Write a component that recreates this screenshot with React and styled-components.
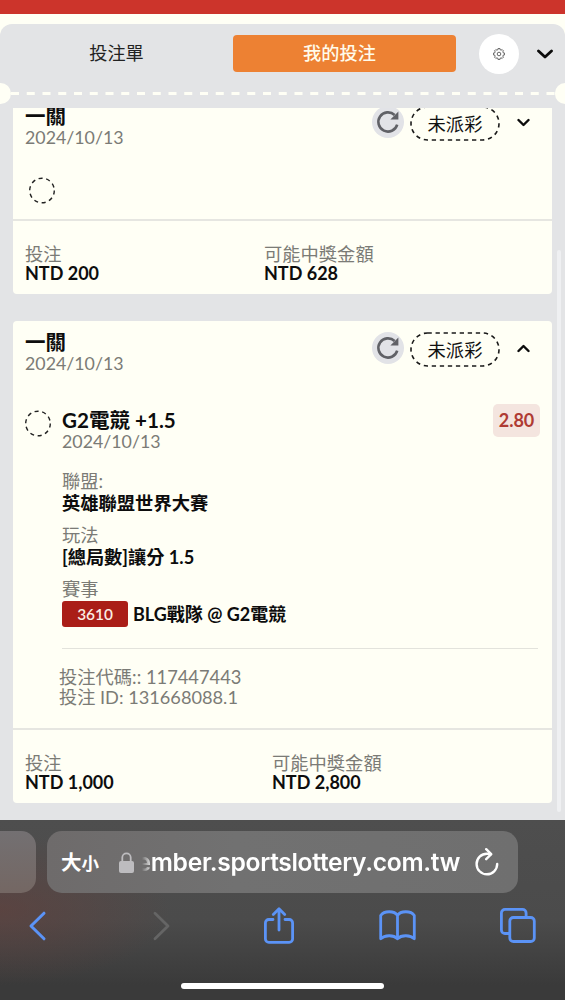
import React from 'react';
import styled, { createGlobalStyle } from 'styled-components';

const GlobalStyle = createGlobalStyle`
  * {
    box-sizing: border-box;
  }
  body {
    margin: 0;
    background: #fffff5;
    font-family: Lato, 'Noto Sans CJK TC', sans-serif;
    color: #111;
  }
  svg {
    display: block;
    flex: none;
  }
`;

const Page = styled.div`
  display: flex;
  flex-direction: column;
  width: 565px;
  height: 1000px;
  overflow: hidden;
`;

const TopBar = styled.div`
  height: 14px;
  background: #cc342b;
  margin-bottom: 10px;
`;

const Panel = styled.div`
  flex: 1;
  min-height: 0;
  display: flex;
  flex-direction: column;
  background: #e3e4e6;
  border-radius: 12px 12px 0 0;
`;

const Tabs = styled.div`
  display: flex;
  align-items: center;
  height: 59px;
`;

const Tab = styled.div`
  width: ${(p) => (p.$active ? 223 : 233)}px;
  height: 37px;
  line-height: 37px;
  padding-right: ${(p) => (p.$active ? 10 : 0)}px;
  border-radius: 4px;
  text-align: center;
  font-size: 18.2px;
  font-weight: ${(p) => (p.$active ? 500 : 400)};
  color: ${(p) => (p.$active ? '#fffbea' : '#222')};
  background: ${(p) => (p.$active ? '#ed8133' : 'transparent')};
`;

const RoundButton = styled.div`
  display: flex;
  align-items: center;
  justify-content: center;
  width: 40px;
  height: 40px;
  margin: 0 18px 0 23px;
  border-radius: 50%;
  background: #fff;
`;

const Perforation = styled.div`
  display: flex;
  align-items: center;
  justify-content: space-between;
  height: 21px;
`;

const Notch = styled.div`
  width: 10.5px;
  height: 21px;
  background: #fffff5;
  border-radius: ${(p) => (p.$right ? '11px 0 0 11px' : '0 11px 11px 0')};
`;

const Scroller = styled.div`
  display: flex;
  justify-content: space-between;
  height: 712px;
  margin-top: 4px;
  padding-left: 13px;
  overflow: hidden;
`;

const List = styled.div`
  width: 539px;
  margin-top: -13px;
`;

const ScrollTrack = styled.div`
  width: 4px;
  height: 562px;
  margin: 142px 4px 0 0;
  border-radius: 2px;
  background: #eff0f2;
`;

const Card = styled.div`
  background: #fffff5;
  border-radius: 4px;
  margin-bottom: 27px;
`;

const CardHead = styled.div`
  display: flex;
  height: ${(p) => p.$height}px;
  padding: 10px 22px 0 12px;
`;

const HeadText = styled.div`
  flex: 1;
`;

const Refresh = styled.div`
  display: flex;
  align-items: center;
  justify-content: center;
  width: 32px;
  height: 32px;
  margin: 1px 6px 0 0;
  border-radius: 50%;
  background: #e2e3e7;
`;

const Pill = styled.div`
  position: relative;
  width: 90px;
  height: 35px;
  margin: 1px 17px 0 0;
  line-height: 36px;
  text-align: center;
  font-size: 18.3px;
  svg {
    position: absolute;
    inset: 0;
  }
`;

const Arrow = styled.div`
  padding-top: 13px;
`;

const Line = styled.div`
  height: ${(p) => p.$h || 22}px;
  line-height: ${(p) => p.$h || 22}px;
  font-size: ${(p) => p.$size || 18.3}px;
  font-weight: ${(p) => (p.$bold ? 700 : 400)};
  color: ${(p) => (p.$bold ? '#0d0d0d' : '#7b7b76')};
  white-space: nowrap;
`;

const Collapsed = styled.div`
  height: 42px;
  padding-left: 16px;
`;

const Selection = styled.div`
  display: flex;
  height: 324px;
  padding: 0 12px;
`;

const Marker = styled.div`
  width: 37px;
  padding-top: 6px;
`;

const Detail = styled.div`
  flex: 1;
`;

const Field = styled.div`
  margin-top: ${(p) => p.$gap}px;
`;

const MatchRow = styled.div`
  display: flex;
  align-items: center;
  gap: 5px;
  height: 26px;
  margin-top: 1px;
`;

const MatchCode = styled.div`
  width: 66px;
  height: 26px;
  line-height: 26px;
  border-radius: 3px;
  text-align: center;
  font-size: 15.4px;
  font-weight: 600;
  color: #fbeee4;
  background: #aa1e17;
`;

const BetIds = styled.div`
  margin-top: 21px;
  margin-right: 2px;
  padding-top: 18px;
  border-top: 1px solid #e3e3dc;
  text-indent: -3px;
`;

const Odds = styled.div`
  width: 47px;
  height: 33px;
  margin: 0 0 0 -47px;
  line-height: 33px;
  border-radius: 5px;
  text-align: center;
  font-size: 18px;
  font-weight: 700;
  color: #af3b33;
  background: #f4e5df;
`;

const CardFoot = styled.div`
  display: flex;
  height: 75px;
  padding: 23px 12px 0;
  border-top: 2px solid #e6e6e1;
`;

const FootCol = styled.div`
  width: ${(p) => p.$width}px;
`;

const Browser = styled.div`
  height: 180px;
  background: radial-gradient(
      ellipse 170px 75px at 0 90px,
      rgba(105, 60, 55, 0.5),
      rgba(105, 60, 55, 0)
    ),
    linear-gradient(#4e4e4e 0, #4b4b4b 100px, #3a3a3a 165px);
`;

const AddressRow = styled.div`
  display: flex;
  gap: 11px;
  padding-top: 11px;
`;

const PreviousTab = styled.div`
  width: 36px;
  height: 62px;
  border-radius: 0 15px 15px 0;
  background: linear-gradient(#737072, #746763);
`;

const Address = styled.div`
  display: flex;
  align-items: center;
  width: 471px;
  height: 62px;
  padding: 0 19px 0 14px;
  border-radius: 15px;
  color: #fff;
  background: linear-gradient(90deg, #6e6b6b, #717171 40%, #6f6f6f);
`;

const TextSize = styled.div`
  display: flex;
  align-items: baseline;
  width: 58px;
  font-family: 'Noto Sans CJK TC', sans-serif;
  font-size: 20.5px;
  font-weight: 700;
  line-height: 30px;
  small {
    font-size: 17.5px;
  }
`;

const Url = styled.div`
  display: flex;
  justify-content: flex-end;
  width: 318px;
  margin: 0 15px 0 8px;
  overflow: hidden;
  white-space: nowrap;
  font-family: Inter, sans-serif;
  font-size: 24.6px;
  font-weight: 600;
  line-height: 34px;
  letter-spacing: -0.31px;
  mask-image: linear-gradient(90deg, transparent, #000 11px);
`;

const NavRow = styled.div`
  display: grid;
  grid-template-columns: 75px 172px 63px 175px 65px;
  align-items: center;
  justify-items: center;
  height: 65px;
`;

const HomeBar = styled.div`
  width: 203px;
  height: 6px;
  margin: 25px 0 0 181px;
  border-radius: 3px;
  background: #fff;
`;

function Chevron({ width, height, stroke = 2.6, up }) {
  const y1 = up ? height - 2 : 2;
  const y2 = up ? 2 : height - 2;
  return (
    <svg width={width} height={height} fill="none" stroke="#0c0c0c" strokeWidth={stroke}>
      <path
        d={`M1.5 ${y1} L${width / 2} ${y2} L${width - 1.5} ${y1}`}
        strokeLinejoin="round"
        strokeLinecap="round"
      />
    </svg>
  );
}

// eight rounded teeth around the hub
const gearPath = Array.from({ length: 8 }, (_, i) => {
  const at = (deg, r) => {
    const a = ((i * 45 + deg) * Math.PI) / 180;
    return `${(12 + r * Math.cos(a)).toFixed(2)} ${(12 + r * Math.sin(a)).toFixed(2)}`;
  };
  return `${i ? 'L' : 'M'}${at(-15, 8.8)}L${at(-11, 11)}L${at(11, 11)}L${at(15, 8.8)}`;
}).join('');

function GearIcon() {
  return (
    <svg width="12" height="12" viewBox="0 0 24 24" fill="none" stroke="#555" strokeWidth="1.8">
      <path d={`${gearPath}Z`} strokeLinejoin="round" />
      <circle cx="12" cy="12" r="3.6" />
    </svg>
  );
}

function DashedCircle() {
  return (
    <svg width="26" height="27" fill="none" stroke="#222" strokeWidth="1.4">
      <circle cx="13" cy="13.5" r="12.3" strokeDasharray="4.1 3.63" />
    </svg>
  );
}

function RefreshIcon() {
  return (
    <svg width="24" height="24" fill="none" stroke="#606166" strokeWidth="2.6">
      <path d="M21.2 14.6A9.6 9.6 0 1 1 18.6 5" />
      <path d="M22.4 1.4v8h-8z" fill="#606166" stroke="none" />
    </svg>
  );
}

function CardHeader({ title, date, open, height }) {
  return (
    <CardHead $height={height}>
      <HeadText>
        <Line $bold $size={20.5}>{title}</Line>
        <Line $h={21} $size={17.8}>{date}</Line>
      </HeadText>
      <Refresh>
        <RefreshIcon />
      </Refresh>
      <Pill>
        <svg width="90" height="35" fill="none" stroke="#1a1a1a" strokeWidth="1.6">
          <rect x="1" y="1" width="88" height="33" rx="16.5" strokeDasharray="4.3 3.75" />
        </svg>
        未派彩
      </Pill>
      <Arrow>
        <Chevron width={13} height={9} stroke={2.4} up={open} />
      </Arrow>
    </CardHead>
  );
}

function CardFooter({ stake, payout, width }) {
  return (
    <CardFoot>
      <FootCol $width={width}>
        <Line $h={20}>投注</Line>
        <Line $h={19} $size={18} $bold>{stake}</Line>
      </FootCol>
      <div>
        <Line $h={20}>可能中獎金額</Line>
        <Line $h={19} $size={18} $bold>{payout}</Line>
      </div>
    </CardFoot>
  );
}

export default function App() {
  return (
    <Page>
      <GlobalStyle />
      <TopBar />
      <Panel>
        <Tabs>
          <Tab>投注單</Tab>
          <Tab $active>我的投注</Tab>
          <RoundButton>
            <GearIcon />
          </RoundButton>
          <Chevron width={16} height={10} stroke={2.8} />
        </Tabs>
        <Perforation>
          <Notch />
          <svg width="544" height="3">
            <path d="M0 1.5H544" stroke="#fffff5" strokeWidth="3" strokeDasharray="8 7.75" />
          </svg>
          <Notch $right />
        </Perforation>
        <Scroller>
          <List>
            <Card>
              <CardHeader title="一關" date="2024/10/13" height={82} />
              <Collapsed>
                <DashedCircle />
              </Collapsed>
              <CardFooter stake="NTD 200" payout="NTD 628" width={239} />
            </Card>
            <Card>
              <CardHeader title="一關" date="2024/10/13" height={83} open />
              <Selection>
                <Marker>
                  <DashedCircle />
                </Marker>
                <Detail>
                  <Field $gap={5}>
                    <Line $bold $size={20.6}>G2電競 +1.5</Line>
                    <Line $h={21} $size={17.8}>2024/10/13</Line>
                  </Field>
                  <Field $gap={18}>
                    <Line>聯盟:</Line>
                    <Line $bold>英雄聯盟世界大賽</Line>
                  </Field>
                  <Field $gap={10}>
                    <Line>玩法</Line>
                    <Line $bold $size={18.2}>[總局數]讓分 1.5</Line>
                  </Field>
                  <Field $gap={10}>
                    <Line>賽事</Line>
                    <MatchRow>
                      <MatchCode>3610</MatchCode>
                      <Line $bold $size={18}>BLG戰隊 @ G2電競</Line>
                    </MatchRow>
                  </Field>
                  <BetIds>
                    <Line $h={20}>投注代碼:: 117447443</Line>
                    <Line $h={20} $size={18.2}>投注 ID: 131668088.1</Line>
                  </BetIds>
                </Detail>
                <Odds>2.80</Odds>
              </Selection>
              <CardFooter stake="NTD 1,000" payout="NTD 2,800" width={247} />
            </Card>
          </List>
          <ScrollTrack />
        </Scroller>
      </Panel>
      <Browser>
        <AddressRow>
          <PreviousTab />
          <Address>
            <TextSize>
              大<small>小</small>
            </TextSize>
            <svg width="15" height="21" fill="#bdbcbf">
              <rect x="0" y="9" width="15" height="12" rx="2" />
              <path d="M3.3 10V5.6a4.2 4.2 0 0 1 8.4 0V10" fill="none" stroke="#bdbcbf" strokeWidth="1.8" />
            </svg>
            <Url>ember.sportslottery.com.tw</Url>
            <svg width="24" height="28" fill="none" stroke="#fff" strokeWidth="2.4" strokeLinecap="round" strokeLinejoin="round">
              <path d="M22.2 16A10.3 10.3 0 1 1 12 5.7c1.4 0 2.6.2 3.8.5" />
              <path d="M11.2 1.2l5 5-5 5" />
            </svg>
          </Address>
        </AddressRow>
        <NavRow>
          <svg width="19" height="30" fill="none" stroke="#5b93f6" strokeWidth="3" strokeLinecap="round" strokeLinejoin="round">
            <path d="M16 2.2L3 15l13 12.8" />
          </svg>
          <svg width="19" height="30" fill="none" stroke="#656565" strokeWidth="2.8" strokeLinecap="round" strokeLinejoin="round">
            <path d="M3 2.2L16 15 3 27.8" />
          </svg>
          <svg width="30" height="37" fill="none" stroke="#5b93f6" strokeWidth="2.8" strokeLinecap="round" strokeLinejoin="round">
            <path d="M9 12.5H4.8a3.4 3.4 0 0 0-3.4 3.4v16a3.4 3.4 0 0 0 3.4 3.4h20.4a3.4 3.4 0 0 0 3.4-3.4v-16a3.4 3.4 0 0 0-3.4-3.4H21" />
            <path d="M15 23V2M9.3 7.5L15 1.8l5.700 5.700" />
          </svg>
          <svg width="37" height="31" fill="none" stroke="#5b93f6" strokeWidth="2.8" strokeLinejoin="round">
            <path d="M18.5 5.5C15.5.5 5 .5 1.7 5.5V28.8C5.5 25 14.5 24.5 18.5 28.8C22.5 24.5 31.5 25 35.3 28.8V5.5C32 .5 21.5.5 18.5 5.5zV28.8" />
          </svg>
          <svg width="36" height="35" fill="none" stroke="#5b93f6" strokeWidth="2.8" strokeLinejoin="round">
            <rect x="9.8" y="9.5" width="24.5" height="24" rx="3.6" />
            <path d="M9.5 25.5H5a3.6 3.6 0 0 1-3.6-3.6V5A3.6 3.6 0 0 1 5 1.4h17.5a3.6 3.6 0 0 1 3.6 3.6v4" />
          </svg>
        </NavRow>
        <HomeBar />
      </Browser>
    </Page>
  );
}
